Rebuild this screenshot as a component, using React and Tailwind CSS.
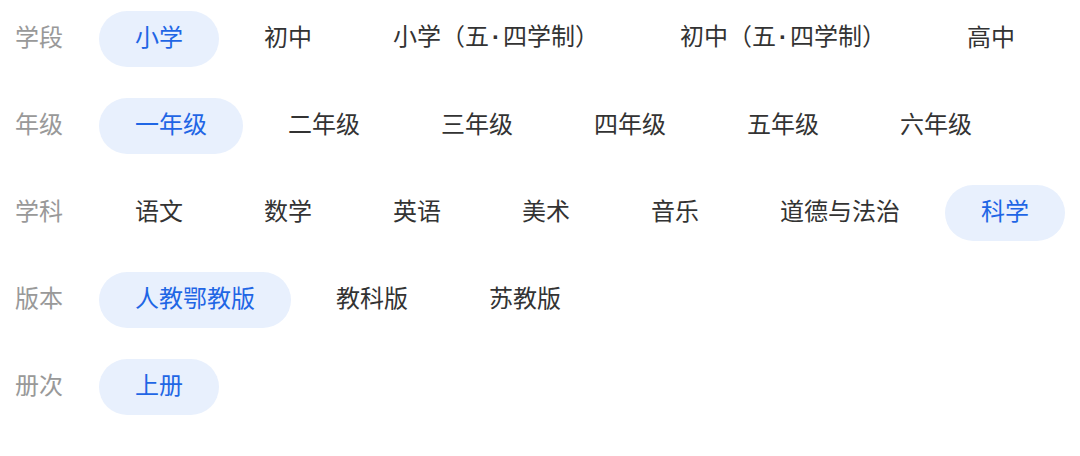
import React from 'react';

const Dot = () => <span className="mx-[3px] font-['Liberation_Sans'] font-bold">·</span>;

const rows = [
    { label: '学段', items: ['小学', '初中', ['小学（五', '四学制）'], ['初中（五', '四学制）'], '高中'], active: 0 },
    { label: '年级', items: ['一年级', '二年级', '三年级', '四年级', '五年级', '六年级'], active: 0 },
    { label: '学科', items: ['语文', '数学', '英语', '美术', '音乐', '道德与法治', '科学'], active: 6 },
    { label: '版本', items: ['人教鄂教版', '教科版', '苏教版'], active: 0 },
    { label: '册次', items: ['上册'], active: 0 },
];

const FilterRow = ({ label, items, active }) => (
    <div className="flex items-center">
        <span className="w-[99px] shrink-0 pl-[15px] pb-[6px] text-[24px] text-[#999999]">{label}</span>
        <div className="flex items-center gap-[9px]">
            {items.map((item, i) => (
                <button
                    key={Array.isArray(item) ? item.join('') : item}
                    className={
                        i === active
                            ? 'h-[56px] px-[36px] pb-[6px] rounded-full bg-[#e8f0fd] text-[24px] text-[#1f66e5] whitespace-nowrap'
                            : 'h-[56px] px-[36px] pb-[6px] rounded-full text-[24px] text-[#333333] whitespace-nowrap'
                    }
                >
                    {Array.isArray(item) ? (
                        <>
                            {item[0]}
                            <Dot />
                            {item[1]}
                        </>
                    ) : (
                        item
                    )}
                </button>
            ))}
        </div>
    </div>
);

const App = () => (
    <div
        className="w-[1080px] h-[456px] bg-white pt-[11px] flex flex-col gap-[31px] overflow-hidden"
        style={{ fontFamily: '"Noto Sans CJK SC", "Noto Sans", sans-serif' }}
    >
        {rows.map((row) => (
            <FilterRow key={row.label} {...row} />
        ))}
    </div>
);

export default App;
